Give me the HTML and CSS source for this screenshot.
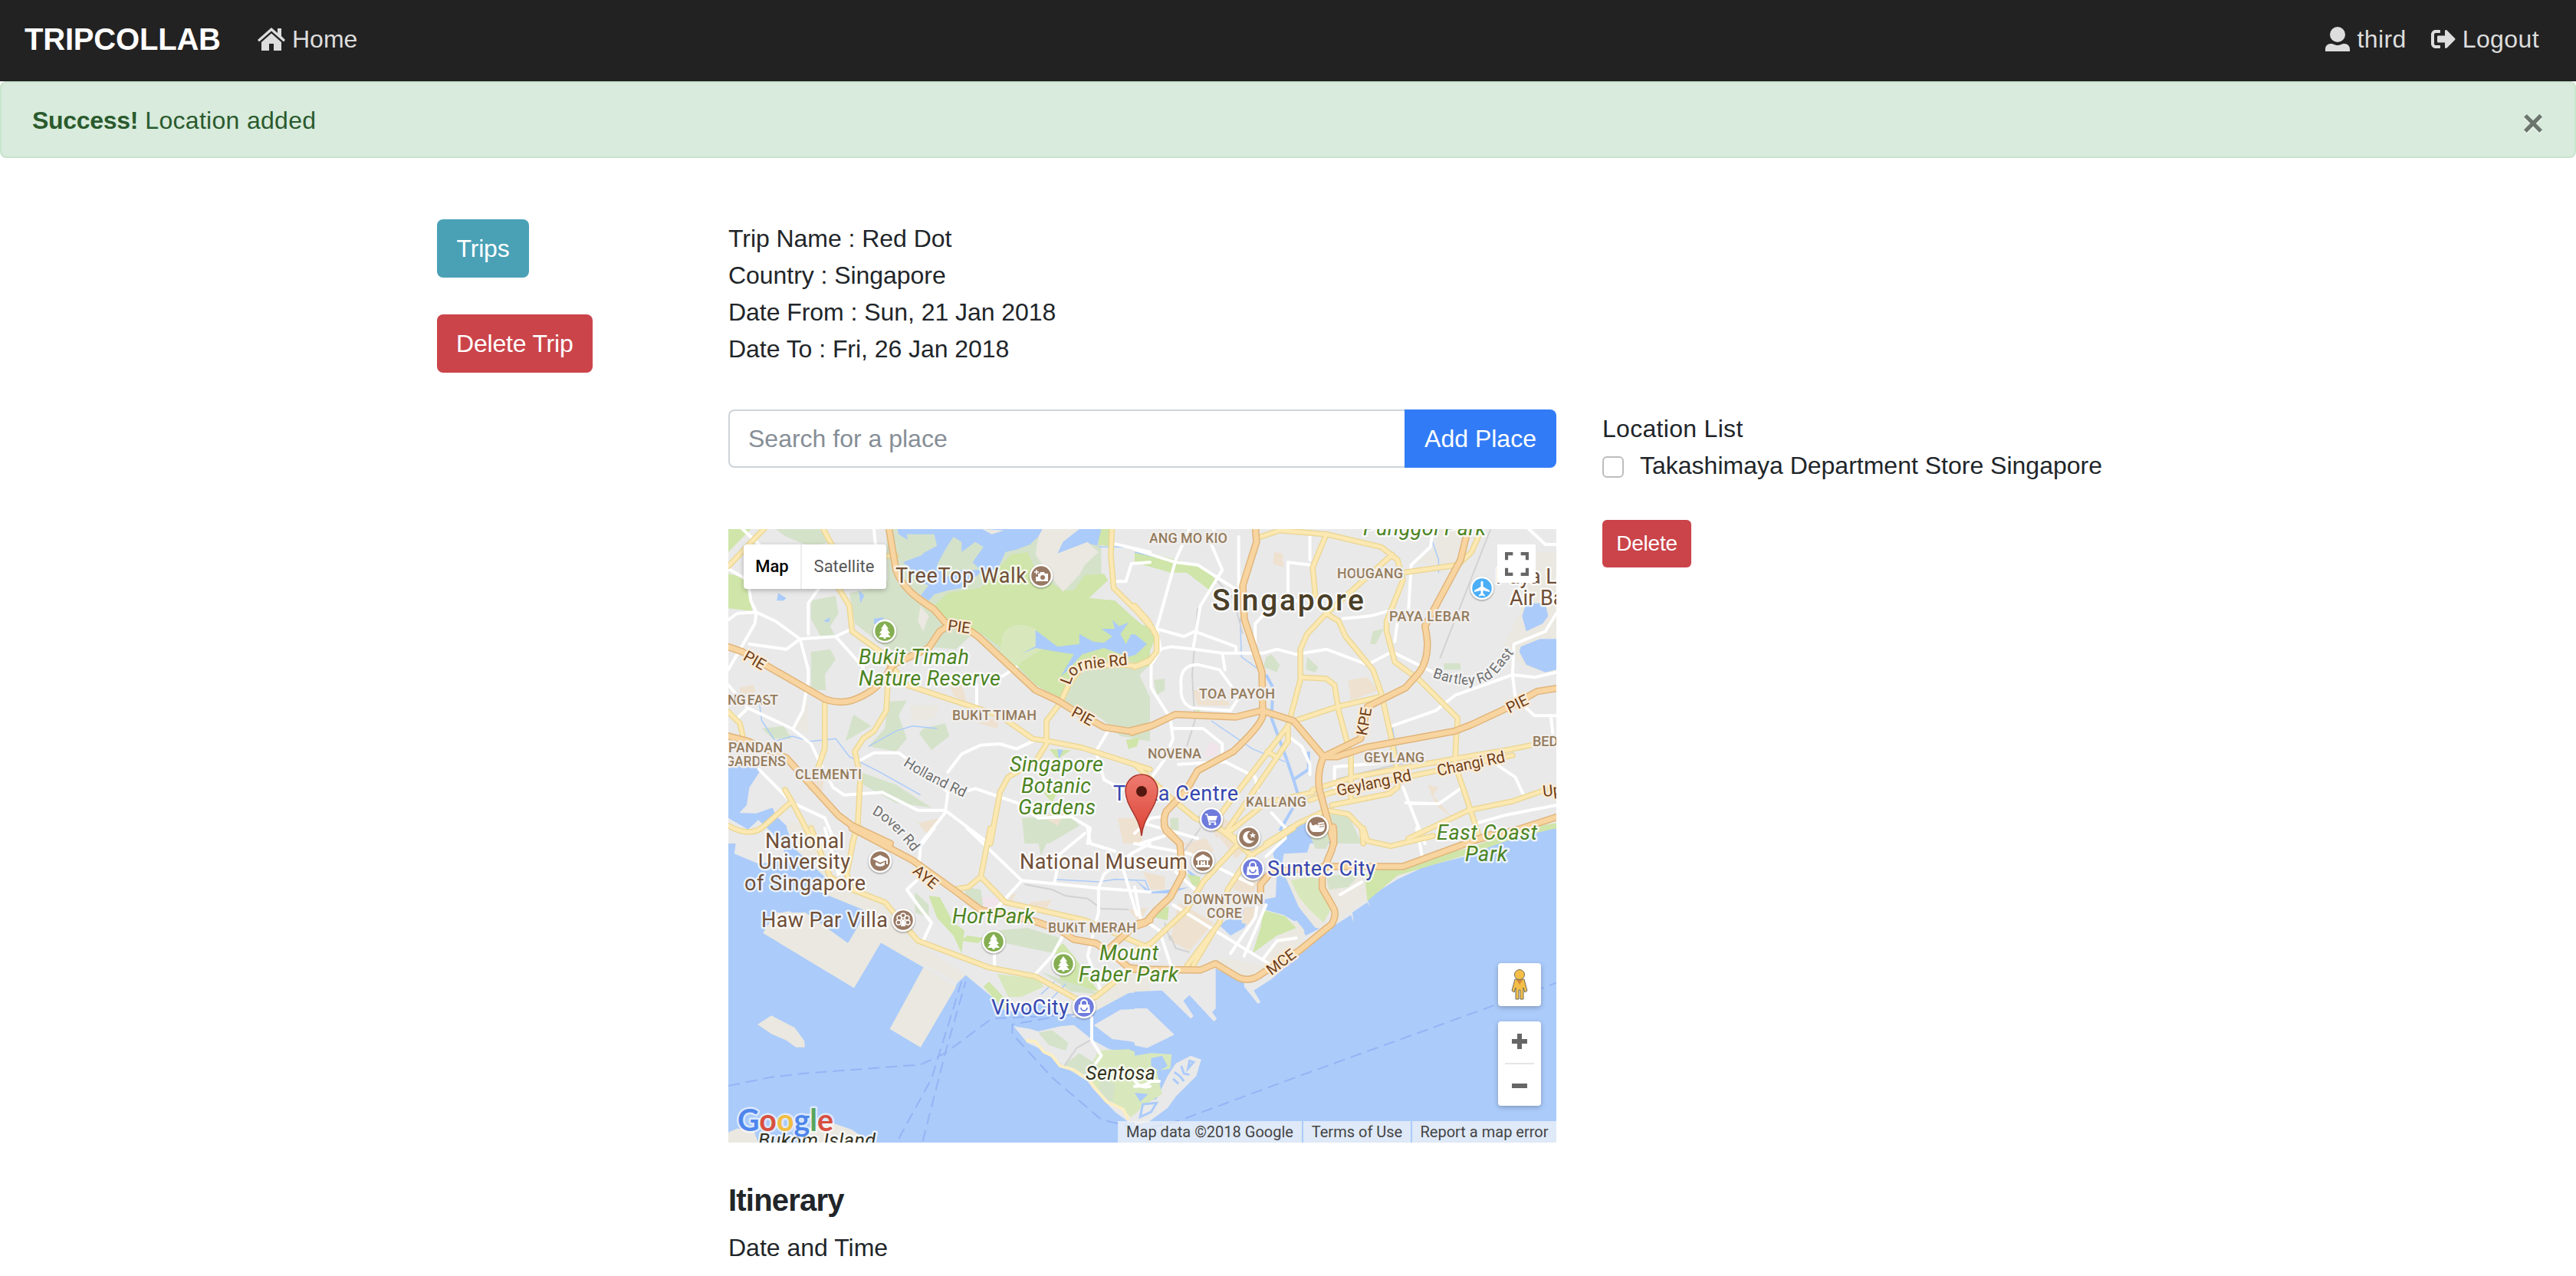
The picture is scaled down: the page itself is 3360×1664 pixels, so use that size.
FILE: index.html
```html
<!DOCTYPE html>
<html lang="en">
<head>
<meta charset="utf-8">
<title>TripCollab</title>
<link rel="stylesheet" href="styles.css">
</head>
<body>
<nav class="navbar">
  <a class="brand">TRIPCOLLAB</a>
  <a class="nav-link home"><svg class="icon-home" viewBox="0 0 36 30"><path d="M18 0 26 7V1h5v10l5 5-2 2.500L18 4.500 2 18.500 0 16Z"/><path d="M18 7.500 31 19v11H21v-9h-6v9H5V19Z"/></svg>Home</a>
  <div class="nav-right">
    <a class="nav-link"><svg class="icon-user" viewBox="0 0 32 32"><circle cx="16" cy="10" r="10"/><path d="M0 32v-3c0-4 3-7 7-7 4 0 5 2 9 2s5-2 9-2c4 0 7 3 7 7v3Z"/></svg>third</a>
    <a class="nav-link"><svg class="icon-out" viewBox="0 0 512 512"><path d="M497 273L329 441c-15 15-41 4.500-41-17v-96H152c-13.300 0-24-10.700-24-24v-96c0-13.300 10.700-24 24-24h136V88c0-21.400 25.900-32 41-17l168 168c9.300 9.400 9.300 24.600 0 34zM192 436v-40c0-6.600-5.400-12-12-12H96c-17.700 0-32-14.300-32-32V160c0-17.700 14.300-32 32-32h84c6.600 0 12-5.400 12-12V76c0-6.600-5.400-12-12-12H96c-53 0-96 43-96 96v192c0 53 43 96 96 96h84c6.600 0 12-5.400 12-12z"/></svg>Logout</a>
  </div>
</nav>
<div class="alert"><p><strong>Success!</strong> Location added</p><button class="close">×</button></div>

<main class="container">
  <aside class="actions">
    <button class="btn info">Trips</button>
    <button class="btn danger">Delete Trip</button>
  </aside>
  <section class="trip">
    <div class="details">
      <p>Trip Name : Red Dot</p>
      <p>Country : Singapore</p>
      <p>Date From : Sun, 21 Jan 2018</p>
      <p>Date To : Fri, 26 Jan 2018</p>
    </div>
    <div class="search"><input type="text" placeholder="Search for a place"><button class="btn primary">Add Place</button></div>
    <div class="map">
      <svg class="canvas" viewBox="0 0 1080 800">
        <defs>
          <linearGradient id="pin" x1="0" y1="0" x2="0" y2="1"><stop offset="0" stop-color="#ee7b70"/><stop offset="1" stop-color="#dc4234"/></linearGradient>
          <path id="tree" d="M0-10 5-3H3L7 3H4L8 8H1.500v2h-3V8H-8L-4 3H-7L-3-3H-5Z"/>
          <g id="bag"><path d="M-7-3H7L8 8H-8Z"/><path d="M-4-3v-2a4 4 0 0 1 8 0v2" fill="none" stroke="#fff" stroke-width="2"/><path d="M-4 1a4 4 0 0 0 8 0" fill="none" stroke="#6f7cdc" stroke-width="1.800"/></g>
          <path id="curve-lornie" d="M446 204Q450 184 472 182L530 176"/>
          <path id="curve-holland" d="M228 308Q258 328 320 356"/>
          <path id="curve-dover" d="M187 371Q216 386 250 434"/>
          <path id="curve-bartley" d="M918 193C958 207 984 207 1003 188L1045 136"/>
          <g id="highways">
            <g transform="translate(-10 -10) scale(.35714 .33333)">
              <path d="M612 10 640 190Q660 250 720 300L780 345 820 395 900 420 940 450 1080 590 1150 660 1230 700 1290 740 1400 805 1490 820 1568 800"/>
              <path d="M10 484 80 510 380 695Q430 715 480 700 560 670 600 610L630 560 760 495 800 430 830 410"/>
              <path d="M10 835 100 860 240 925 430 1150 480 1190 620 1260"/>
            </g>
            <g transform="translate(530 -10) scale(.35714 .33333)">
              <path d="M440 10 445 80 395 250 400 380 465 590 468 760Q460 800 360 900L230 975 190 1050 115 1135Q100 1170 115 1210L165 1260"/>
              <path d="M-10 825 60 800 150 755 370 765 465 740 580 780 690 920 740 920 840 885 1170 820 1230 795 1380 720 1470 665 1560 650"/>
              <path d="M1220 20 1190 150 1060 410Q1085 520 1040 590L990 650 850 725 825 850 690 920Q665 980 675 1050L728 1260"/>
              <path d="M1250 1245 1400 1205 1560 1150"/>
            </g>
            <g transform="translate(-10 390) scale(.35714 .33333)">
              <path d="M480 0 700 125 850 240 950 320 1150 365 1240 400 1290 435 1370 450 1440 500 1490 545 1568 555"/>
              <path d="M1568 360 1520 375 1420 470"/>
            </g>
            <g transform="translate(530 390) scale(.35714 .33333)">
              <path d="M-10 552 240 555 295 530 380 585Q425 605 470 565L600 480 720 375Q740 335 725 310L685 235 685 180 710 110Q735 60 725-5"/>
              <path d="M108-5 165 60 175 180 130 270 80 320 40 370 0 385"/>
              <path d="M460 290V220L500 170 600 160 700 150H980L1300 25"/>
            </g>
          </g>
          <g id="arterials">
            <g transform="translate(-10 -10) scale(.35714 .33333)">
              <path d="M175 10 28 175M365 10 405 90 430 260 470 330 480 430 610 530 625 600M620 560 680 640 1020 760 1140 850 1200 860 1320 885 1568 970M610 640 605 740 560 820 520 850 490 900 510 1000 500 1200 480 1260M380 715V890L350 980M28 745 70 790 85 860M28 1190Q110 1240 160 1190L260 1095 340 1260M235 1050 260 1095M1430 10 1425 130 1435 260 1520 350 1568 410M1568 540 1520 565 1440 560 1320 570 1270 640 1240 710 1190 780V870L1150 940 1050 1000 1020 1060 985 1260M605 135H640"/>
            </g>
            <g transform="translate(530 -10) scale(.35714 .33333)">
              <path d="M0 330 50 390 80 450V510L50 550 0 570M460 60 530 35 700 50 900 100 960 150 980 230 920 390V430L950 550 1040 620 1180 770 1175 830 1170 950 1230 1140 1260 1240M700 50 650 180 660 290M980 200 1180 170 1230 120 1255 60M940 130 700 360 630 440 605 500V620L560 800V860L330 1220M700 360 745 390 770 450 870 580 900 670 940 860 960 980V1040L930 1065 720 1110M605 610 700 615 730 640 745 740 790 920V1080M570 785 740 725 900 685M560 800 310 1150M485 900 515 920M650 1050 800 1000 1160 930 1380 890 1450 875M640 1090 720 1060 1150 965 1380 915M0 950 60 1010 130 1080 220 1160 340 1220 400 1260M480 1260 600 1180 700 1130 780 1145 830 1200 835 1260M1000 1240 1220 1130 1380 1095 1500 1050M340 1220 480 1100 650 1060"/>
            </g>
            <g transform="translate(-10 390) scale(.35714 .33333)">
              <path d="M985 0 950 190 1040 290 1330 360 1568 470M950 190 905 230 850 240M330 0 400 190 430 210M490 20 460 180 480 240 600 290 680 390 720 440 980 545 1150 580 1320 680 1370 660 1440 600"/>
            </g>
            <g transform="translate(530 390) scale(.35714 .33333)">
              <path d="M580 0 420 110 340 240 310 370 190 540M310 0 430 110M380 60 250 210 190 320 60 450 0 480M290 400 215 535M835 0 850 50 935 70 1090 30"/>
            </g>
          </g>
        </defs>
        <rect class="land" width="1080" height="800"/>

        <!-- parks, built-up areas and water -->
        <g transform="translate(-10 -10) scale(.35714 .33333)">
          <path class="grove" d="M605 30H1390V210L1340 300 1440 310 1500 370 1568 430V560L1530 600 1568 690V860L1460 840 1390 770 1220 690 1090 590 1000 490 920 440 860 500 750 490 690 540 600 490 490 400 470 280 540 265 610 230Z"/>
          <path class="grove" d="M200 30H360L400 80 330 100 240 60ZM330 310 420 290 430 360 400 410 420 450 370 460 330 380ZM330 510 400 500 420 540 380 600 385 660 330 660ZM485 755 550 800 455 860ZM610 705 680 700 650 760 680 850 640 900 540 880 600 810ZM740 810 820 790 835 840 770 895 725 830ZM510 980 640 1030 770 1120 640 1100 520 1030ZM150 810 230 800 260 850 190 850Z"/>
          <path class="grove" d="M1100 1160 1280 1150 1310 1190 1200 1260H1110Z"/>
          <path class="built" d="M70 650 120 640 130 680 70 700ZM830 620 880 640 900 710 850 680ZM940 790 1020 760 1010 810ZM1170 1150 1260 1130 1230 1190ZM720 1180 800 1160 760 1230ZM310 1010 380 990 370 1060 320 1050ZM1450 1160 1530 1160 1540 1260H1470Z"/>
          <path class="park" d="M28 30H110L28 120ZM28 205 90 220 115 350 28 340ZM1380 30H1430V100L1380 90ZM1200 890 1280 895 1230 930ZM1170 1050 1230 1060 1210 1100ZM1480 855 1530 845 1520 880 1490 890Z"/>
          <path class="park" d="M780 330 830 280 950 260 1000 200 1060 130 1120 120 1160 210 1250 270H1290L1330 210 1400 205 1415 230 1345 300 1440 310 1500 370 1568 430V570L1450 530 1310 570 1240 690 1150 640 1020 490 940 430 830 400Z"/>
          <path class="lawn" d="M1030 440Q1070 380 1150 420L1190 490 1100 550 1060 590 1020 510Z"/>
          <path class="water" d="M645 30H1390L1375 95 1340 85 1250 125 1225 160 1180 190 1160 60 1130 90 1080 110 1040 120 1010 190 950 200 880 260 830 270 780 285 760 310 730 290 760 250 715 235 690 180 665 160 740 130 710 90 650 50Z"/>
          <path class="sand" d="M1175 30 1310 30 1250 80 1230 125 1340 80 1380 120 1330 170 1310 210 1250 275 1200 210 1150 130 1160 60ZM955 30 1035 35 990 50Z"/>
          <path class="grove" d="M680 50 780 50 790 95 730 130 690 110ZM850 60 880 80 880 120 930 80 960 100 920 160 950 190 880 190 820 220 790 170 820 110Z"/>
          <path class="water" d="M1150 425 1230 490 1310 480V440L1360 470 1400 475 1430 450 1390 420 1440 420 1430 385 1455 410 1490 395 1460 440 1480 480 1500 440 1535 450 1510 480 1568 475V500L1490 530 1400 495 1320 520 1260 590 1242 605 1290 520 1230 510 1150 495 1095 520 1150 488ZM210 280 240 300 230 310 205 310ZM505 270 525 290 510 320ZM375 390 400 375 395 395ZM560 380 595 375 590 410 560 400ZM1230 890 1250 895 1235 930Z"/>
          <path class="water" d="M28 960 110 955 145 975 105 1040 95 1110 68 1140 130 1142 190 1120 200 1150 240 1190 255 1270H220L190 1220 130 1160 70 1150 65 1130 90 1110 95 1040 28 1040ZM28 1010 95 1010 92 1110 65 1130 80 1150 150 1155 100 1205 28 1160Z"/>
          <path class="sand" d="M315 650 320 830 270 810 305 720ZM690 720 800 720 780 770 700 780ZM730 330 760 370 740 430 720 390Z"/>
          <path class="creek" d="M140 700 150 780 200 860 260 840 330 860 420 850 470 920 580 980 730 1070M540 880 640 820 700 800 790 810M1380 100 1500 100 1568 150"/>
        </g>
        <g transform="translate(530 -10) scale(.35714 .33333)">
          <path class="park" d="M0 110 150 150 250 180 300 230 275 270 190 200 130 200 0 160ZM0 400 50 410 75 460 50 520 0 550ZM210 730H260L230 745ZM1480 1190 1540 1180V1215L1480 1220Z"/>
          <path class="grove" d="M70 620 110 615 110 660 80 680ZM480 530 500 520 530 560 520 590 470 570ZM630 530 670 570 660 590 625 580ZM870 430 910 420 880 480 860 480ZM1130 555 1190 555 1190 580 1130 580ZM700 1140 780 1150 830 1260H720ZM0 680 30 720 10 770ZM130 1160 160 1160 160 1210 130 1210Z"/>
          <path class="built" d="M510 120 540 125 545 180 505 165ZM210 660 310 660 350 720 230 720ZM780 620 850 610 890 660 790 700ZM1070 1030 1110 1040 1090 1070 1160 1160 1100 1110ZM310 1150 350 1180 300 1240 280 1200ZM0 1170 30 1200 0 1250Z"/>
          <path class="sand" d="M1110 30H1210L1160 170 1030 160 1100 100ZM1460 120H1540V600L1430 570 1340 500 1420 330Z"/>
          <path class="clinic" d="M275 860 310 880 300 920 250 920Z"/>
          <path class="water" d="M1430 320H1500L1510 370 1490 400 1430 430 1415 370ZM1410 490 1480 460 1540 460V580L1500 590 1430 560 1405 510ZM0 440 45 480 0 525ZM540 1260 550 1220 620 1160 680 1140 740 1260ZM1475 1220 1540 1205V1270H1475Z"/>
          <path class="creek wide" d="M480 600 505 650 500 770 555 930 580 1010 600 1080 530 1210M580 1010 635 970V900"/>
          <path class="creek" d="M385 380 390 530 480 600M1085 70 1110 150V200M280 780 430 890 550 940M940 800 960 920M0 120 120 150"/>
          <path class="rail" d="M1300 30 1115 535M230 340 210 600 220 780 190 880M730 1010 960 950 1150 930M300 230 360 300 395 440"/>
        </g>
        <g transform="translate(-10 390) scale(.35714 .33333)">
          <path class="sand" d="M240-20H340L400 190 600 290 720 450 920 590 860 600 600 450 340 240ZM1490 540H1568V640L1370 720 1290 700Z"/>
          <path class="grove" d="M710 250 760 300 760 350 710 330ZM890 230 950 240 960 310 900 290ZM1010 400 1120 390 1240 430 1220 490 1130 470 1040 450ZM1240 590 1330 610 1380 650 1280 640 1170 560ZM1150 0 1210 10 1170 110Z"/>
          <path class="park" d="M760 265 800 270 850 370 890 400 880 490 850 420 790 350ZM900 420 960 430 940 450 880 440ZM1220 480 1250 450 1290 500 1380 640 1240 590ZM960 620 980 600 1050 680 1040 715Z"/>
          <path class="lawn" d="M1010 570 1160 590 1180 620 1100 660 1050 660Z"/>
          <path class="clinic" d="M955 270 1010 270 1020 300 960 320Z"/>
          <path class="built" d="M1060 260 1080 255 1050 310ZM1130 290 1210 280 1180 330 1120 310ZM1490 320 1560 310 1530 370Z"/>
          <path class="water" d="M28 60 55 60 50 100 140 140 200 130 240 130 205-20 230-20 280 90 390 200 340 240 545 330 465 450 330 360 250 325 200 335 155 410 487 625 585 448 745 547 618 785 730 857 865 605 895 575 990 660 1040 715 1100 715 1150 680 1290 740 1370 715 1490 645 1568 638V1240H28Z"/>
          <path class="sand" d="M155 410 200 330 310 330 400 400 465 450 520 350 640 380 740 545 618 785 730 857 860 620 745 547 585 448 487 625Z"/>
          <path class="sand" d="M135 768 185 733 270 780 305 830 308 857 275 857 240 830 185 805ZM28 1190 60 1175 120 1180 140 1240H28ZM310 1180 400 1150 480 1180 560 1240H310Z"/>
          <path class="isle" d="M1363 770 1460 710 1568 705V860L1500 835 1430 825ZM1070 775 1130 785 1160 795 1240 775 1290 770 1360 830 1420 865 1568 890V1150H1490L1440 1110 1360 1020 1340 990 1250 930 1200 880 1120 840Z"/>
          <path class="lawn" d="M1380 870 1490 865 1568 900V1060L1500 1130 1430 1070 1350 1000 1340 960Z"/>
          <path class="grove" d="M1160 800 1210 790 1270 840 1260 870 1200 850ZM1310 880 1380 930 1330 980 1250 930ZM1390 980 1440 1000 1430 1080 1380 1030Z"/>
          <path class="beach" d="M1115 830 1150 835 1180 875 1210 890 1240 930 1290 945 1350 990 1370 1020 1410 1070 1470 1100 1490 1140"/>
          <path class="rail" d="M1110 220 1210 240 1260 265 1340 275 1390 315 1490 318M1255 930 1300 860 1350 830"/>
          <path class="creek" d="M1220 200 1380 210 1440 200 1550 205 1568 250M1170 650 1220 600M1210 665 1260 610"/>
          <path class="ferry" d="M28 1008 180 975 300 960 730 925 820 880 990 745 1290 730M650 1215 770 980 880 600M738 1225 820 880 895 600M1200 742 1065 768V805L1210 975 1390 1140 1500 1168"/>
        </g>
        <g transform="translate(530 390) scale(.35714 .33333)">
          <path class="water" d="M0 640 100 635 205 745 215 735 178 675 200 653 290 757 300 745 283 720 296 705V550L400 605V620L450 687 460 680 435 635 500 590 620 480 700 400 790 340 800 370 795 330 850 290 860 310 850 280 900 240 960 200 1060 150 1210 110 1350 50 1480 10 1550 0V1240H0Z"/>
          <path class="water" d="M560-10 505 100 520 160 515 270 470 280 480 320 545 340 600 375 625 420 690 385 630 310 560 200 540 130 545 100 630 95 640 60 720 0V-20ZM310 380 370 330 410 310 440 310 400 390 350 420ZM0 200 60 250 130 240 200 230 130 255 50 255ZM190 160 230 190 220 220Z"/>
          <path class="sand" d="M550 190 600 180 640 300 690 370 720 400 660 390 600 310ZM700 190 840 170 850 280 780 330 740 370 690 250ZM275 515 350 510 480 540 440 590 380 580 300 530ZM590 360 620 400 615 460 470 560 480 490 520 430Z"/>
          <path class="built" d="M180 60 260 40 290 90 200 110ZM300 20 360 20 400 90 370 120ZM30 170 110 190 110 240 60 240ZM160 290 290 370 200 480 130 440ZM370 190 450 210 430 260 360 240ZM400 310 450 310 420 380 390 370Z"/>
          <path class="park" d="M840 180 960 140 1210 80 1320 40 1480 0 1540 0 1400 35 1210 105 960 185 850 285ZM470 320 550 345 590 390 520 420 430 490 460 390ZM80 320 125 305 120 360 75 350ZM190 180 240 190 235 235 210 220Z"/>
          <path class="lawn" d="M570 205 640 190 680 200 690 260 720 310 690 370 640 320 600 270Z"/>
          <path class="grove" d="M630 0 730 0 700 80 660 80ZM700 190 830 170 780 230 710 240Z"/>
          <path class="isle" d="M0 705 45 705 145 808 45 860 0 850ZM120 970 150 920 205 890 243 905 225 970 150 1050 120 1095 50 1150 0 1160V1080L80 1060Z"/>
          <path class="lawn" d="M0 890 60 880 135 885 130 940 80 950 100 1040 40 1080 0 1120Z"/>
          <path class="water" d="M60 900 100 890 120 930 90 950 60 930ZM0 1035 50 1040 20 1070Z"/>
          <path class="canal" d="M200 910 215 915 195 940ZM170 930 180 960 200 965M145 955 165 970 180 990M140 980 160 1000M30 1080 80 1075 60 1110 20 1130Z"/>
          <path class="ferry" d="M60 1170 160 1145 600 970 1540 605"/>
          <path class="rail" d="M130 420 150 470 200 485M240 0 180 90M110 370 130 440"/>
        </g>

        <!-- streets -->
        <g class="streets">
          <g transform="translate(-10 -10) scale(.35714 .33333)">
            <path d="M80 30 150 100M28 185 100 230 110 310 130 355 200 390 290 460 320 580V620L300 740 265 810M28 385 60 360 130 355 125 400 28 580M105 480 240 500 290 460 420 450 480 420M420 450 520 570M28 640 100 730 260 810 330 870 365 950 410 1040 450 1070 590 1060 720 1130 820 1130 980 1260M500 940 560 905 650 905 720 960 830 1060 820 1140 730 1260M880 1060 930 1045 1080 1100 1160 1160 1280 1155 1350 1200 1340 1260M830 980 880 910 950 875 1020 870 1080 890 1140 860M140 970 260 1100 380 1160 420 1260M360 260 320 320V440M560 30 565 90M935 640V720M1030 605 1080 570M1430 85 1568 120M1568 160 1500 165 1480 235 1440 235M1415 820 1370 900 1400 1010 1470 1050M60 770 100 730"/>
          </g>
          <g transform="translate(530 -10) scale(.35714 .33333)">
            <path d="M0 110 150 160 230 170 420 300M200 30 150 150 80 420 95 500 60 560V650L130 770 140 850 110 930 30 1050M290 30 280 90 320 190 240 330 215 490M80 420 180 450 220 430 370 490V515M95 500 130 490 220 500 320 515 470 515 520 500 590 520 700 500 850 560 940 510 1090 590M380 60V250M170 650Q160 560 230 560L310 580 350 640 380 690 350 740 210 730Q165 710 170 650M320 515 330 580M440 480V400L520 310M640 170 560 160V290L590 310M640 60V150M760 380 860 370 930 350M1090 30 1080 100 1010 170 1000 350 960 390 950 470M1380 600 1385 480 1500 430 1540 360M940 800 1100 740 1170 680 1380 600 1460 610 1540 590M1380 600 1390 690 1460 760H1540M1440 30 1500 90H1540M140 810 250 810 320 870V920M160 950 330 940 440 1000 450 1050M560 840 610 880 640 950V990M730 1040V960L960 940M980 1040 1060 1260M990 1100 1110 1105 1190 1045M1320 950 1390 1000 1420 1070M1250 1180 1350 1150 1540 1110M500 1140 560 1210M1520 760 1530 860M30 1180 230 1240M0 1220 60 1160 100 1155"/>
          </g>
          <g transform="translate(-10 390) scale(.35714 .33333)">
            <path d="M740 440 770 370 720 300 680 240 720 200 730 70 780 0M900 0 1100 205 1380 235 1568 250M1100 205 1010 310M1000 480V545M1150 570 1210 500 1250 420M1380 235 1380 330 1340 500 1390 640M1340 0 1350 60 1440 90M1220 210 1240 100 1330 20M1355 740V830L1390 890 1370 920M1380 235 1400 180 1500 100 1568 60M1470 160 1520 340M1510 985Q1530 1020 1568 1010M380 0 430 180"/>
          </g>
          <g transform="translate(530 390) scale(.35714 .33333)">
            <path d="M0 60 200 100 430 220M150 170 250 270M0 230 20 350 90 400 130 530M140 300 490 530M350 490 440 350 450 280M400 500 480 300M550 0V40L480 110M1030 0 1050 110M110 30 20 60M470 510 520 440 590 430M0 1010Q40 1010 60 990L90 990M750 260 830 210"/>
          </g>
        </g>
        <use href="#arterials" class="arterial-edge"/><use href="#arterials" class="arterial"/>
        <use href="#highways" class="highway-edge"/><use href="#highways" class="highway"/>

        <!-- labels -->
        <g class="label area">
          <text x="-1" y="229" textLength="66">NG EAST</text><text x="292" y="249" textLength="110">BUKIT TIMAH</text>
          <text x="0" y="291" textLength="71">PANDAN</text><text x="-4" y="309" textLength="79">GARDENS</text>
          <text x="87" y="326" textLength="87">CLEMENTI</text><text x="549" y="18" textLength="102">ANG MO KIO</text>
          <text x="794" y="64" textLength="86">HOUGANG</text><text x="862" y="120" textLength="105">PAYA LEBAR</text>
          <text x="614" y="221" textLength="99">TOA PAYOH</text><text x="547" y="299" textLength="70">NOVENA</text>
          <text x="1049" y="283">BEDOK</text><text x="829" y="304" textLength="79">GEYLANG</text>
          <text x="675" y="362" textLength="79">KALLANG</text><text x="417" y="526" textLength="115">BUKIT MERAH</text>
          <text x="594" y="489" textLength="104">DOWNTOWN</text><text x="624" y="507" textLength="46">CORE</text>
        </g>
        <g class="label nature">
          <text x="170" y="176" textLength="144">Bukit Timah</text><text x="170" y="204" textLength="185">Nature Reserve</text>
          <text x="367" y="316" textLength="122">Singapore</text><text x="382" y="344" textLength="91">Botanic</text><text x="378" y="372" textLength="101">Gardens</text>
          <text x="828" y="8" textLength="160">Punggol Park</text><text x="924" y="405" textLength="131">East Coast</text><text x="961" y="433" textLength="55">Park</text>
          <text x="292" y="514" textLength="107">HortPark</text><text x="484" y="562" textLength="77">Mount</text><text x="457" y="590" textLength="130">Faber Park</text>
        </g>
        <g class="label sight">
          <text x="218" y="70" textLength="171">TreeTop Walk</text><text x="1001" y="71">Paya Lebar</text><text x="1019" y="99">Air Base</text>
          <text x="48" y="416" textLength="103">National</text><text x="39" y="443" textLength="120">University</text><text x="21" y="471" textLength="158">of Singapore</text>
          <text x="43" y="519" textLength="165">Haw Par Villa</text><text x="380" y="443" textLength="219">National Museum</text>
        </g>
        <g class="label shop"><text x="502" y="354" textLength="163">Tekka Centre</text><text x="703" y="452" textLength="141">Suntec City</text><text x="343" y="633" textLength="101">VivoCity</text></g>
        <g class="label isle-name"><text x="466" y="718" textLength="91">Sentosa</text><text x="39" y="806" textLength="153">Bukom Island</text></g>
        <text class="label city" x="631" y="106" textLength="198">Singapore</text>
        <g class="label road">
          <text transform="translate(300 134) rotate(8)">PIE</text><text transform="translate(31 177) rotate(30)">PIE</text><text transform="translate(459 250) rotate(29)">PIE</text>
          <text transform="translate(1032 234) rotate(-26)">PIE</text><text transform="translate(836 252) rotate(-80)">KPE</text>
          <text transform="translate(253 459) rotate(40)">AYE</text><text transform="translate(725 570) rotate(-37)">MCE</text>
        </g>
        <g class="label road start">
          <text transform="translate(926 322) rotate(-12)" textLength="90">Changi Rd</text><text transform="translate(795 348) rotate(-12)" textLength="99">Geylang Rd</text><text transform="translate(1063 349) rotate(-6)">Upper</text>
          <text><textPath href="#curve-lornie">Lornie Rd</textPath></text>
        </g>
        <g class="label street"><text><textPath href="#curve-holland">Holland Rd</textPath></text><text><textPath href="#curve-dover">Dover Rd</textPath></text><text><textPath href="#curve-bartley">Bartley Rd East</textPath></text></g>

        <!-- places -->
        <g class="poi brown" transform="translate(408 61)"><circle r="14"/><path d="M-6-3h4l1-2h5l1 2h4V7H-7V1h3V-3Z"/><path d="M-9-5h6M-6-8v6" stroke="#fff" stroke-width="1.500"/><circle class="hole" cx="2" cy="2" r="3"/></g>
        <g class="poi green" transform="translate(204 133)"><circle r="14"/><use href="#tree"/></g>
        <g class="poi brown" transform="translate(198 433)"><circle r="14"/><path d="M-10-3 0-8 10-3V4H8V-1L0 2ZM-6 1 0 4 6 1V5Q0 9-6 5Z"/></g>
        <g class="poi brown" transform="translate(228 510)"><circle r="14"/><path d="M-2-1H2L3 8H-3Z"/><g class="rings"><circle cy="-6" r="3"/><circle cx="-5" cy="-3" r="3"/><circle cx="5" cy="-3" r="3"/><circle cx="-6" cy="3" r="3"/><circle cx="6" cy="3" r="3"/></g></g>
        <g class="poi green" transform="translate(346 538)"><circle r="14"/><use href="#tree"/></g>
        <g class="poi green" transform="translate(437 567)"><circle r="14"/><use href="#tree"/></g>
        <g class="poi violet" transform="translate(464 623)"><circle r="14"/><use href="#bag"/></g>
        <g class="poi violet" transform="translate(684 443)"><circle r="14"/><use href="#bag"/></g>
        <g class="poi sky" transform="translate(983 77)"><circle r="14"/><path d="M-1.500-8Q0-11 1.500-8V-2L10 3V5L1.500 3V7L4 9V10.500L0 9.500-4 10.500V9L-1.500 7V3L-10 5V3L-1.500-2Z"/></g>
        <g class="poi violet" transform="translate(630 378)"><circle r="14"/><path d="M-5-4H8L6 2H-3Z"/><path d="M-8-6H-5.500L-3 4H6" fill="none" stroke="#fff" stroke-width="1.500"/><circle cx="-2" cy="6.500" r="1.600"/><circle cx="5" cy="6.500" r="1.600"/></g>
        <g class="poi brown" transform="translate(679 402)"><circle r="14"/><path d="M2-8A8 8 0 1 0 7 4 6.500 6.500 0 1 1 2-8ZM5-7l1 3h3L7-2 8 1 5-1 2 1 3-2 1-4H4Z"/></g>
        <g class="poi brown" transform="translate(768 388)"><circle r="14"/><path d="M-10 0Q-11-5-8-6L-7-2.500-5-1.500Q0-4 2-1L1-5 9-6 10 0Q10 7 4 7H-5Q-9 6-10 0Z"/><path class="hole" d="M3-3 9-4V-3L3-2ZM3 0 9-1V0L3 1Z"/></g>
        <g class="poi brown" transform="translate(619 433)"><circle r="14"/><path d="M0-9 9-4V-1H7V5H9V8H-9V5H-7V-1H-9V-4Z"/><path class="hole" d="M-5-1h10v6H-5Z"/><path d="M-3 5V0H-1L0 2 1 0H3V5H1L0 3-1 5Z"/></g>
        <path class="marker" d="M539 400C537 375 518 362 518 341a21 21 0 0 1 42 0C560 362 541 375 539 400Z"/><circle cx="539" cy="342" r="7" fill="#54170f"/>
        <text class="google" x="12" y="785" textLength="125" lengthAdjust="spacingAndGlyphs"><tspan class="b">G</tspan><tspan class="r">o</tspan><tspan class="y">o</tspan><tspan class="b">g</tspan><tspan class="g">l</tspan><tspan class="r">e</tspan></text>
      </svg>
      <div class="map-type"><span class="on">Map</span><span>Satellite</span></div>
      <div class="fullscreen"><svg viewBox="0 0 30 30"><path d="M2 10V2H10M20 2H28V10M28 20V28H20M10 28H2V20"/></svg></div>
      <div class="pegman"><svg viewBox="0 0 24 42"><path d="M6 14H18L22 29 19 31 17 25V40H13V28H11V40H7V25L5 31 2 29Z"/><circle cx="12" cy="8" r="6.500"/><path class="collar" d="M8 15H16L12 21Z"/></svg></div>
      <div class="zoom"><svg viewBox="0 0 22 22"><path d="M8 1h6v7h7v6h-7v7H8v-7H1V8h7Z"/></svg><hr><svg viewBox="0 0 22 22"><path d="M1 8h20v6H1Z"/></svg></div>
      <div class="credits"><span>Map data ©2018 Google</span><span>Terms of Use</span><span>Report a map error</span></div>
    </div>
    <h5>Itinerary</h5>
    <p class="when">Date and Time</p>
  </section>
  <section class="places">
    <p class="title">Location List</p>
    <label><input type="checkbox"><span>Takashimaya Department Store Singapore</span></label>
    <button class="btn danger small">Delete</button>
  </section>
</main>
</body>
</html>
```
FILE: styles.css
```css
* { box-sizing: border-box; }
html, body { height: 100%; }
body { margin: 0; overflow: hidden; background: #fff; color: #212529; font: 32px/48px "Liberation Sans", Arial, sans-serif; }
p, h5 { margin: 0; }
button, input { font: inherit; margin: 0; }
svg { display: block; }

.navbar { display: flex; align-items: center; height: 106px; padding: 0 48px 4px 32px; background: #222; color: #ddd; }
.brand { width: 304px; color: #fff; font-size: 40px; font-weight: bold; letter-spacing: -0.2px; }
.nav-link { display: flex; align-items: center; gap: 9px; fill: #ddd; }
.nav-right { display: flex; gap: 32px; margin-left: auto; letter-spacing: 0.4px; }
.icon-home { width: 36px; height: 30px; }
.icon-user { width: 32px; height: 32px; }
.icon-out { width: 32px; height: 32px; }

.alert { display: flex; justify-content: space-between; align-items: center; height: 100px; padding: 0 40px; background: #d8ebdc; border: 2px solid #c8e4cd; border-radius: 8px; color: #2a5a2d; }
.alert strong { letter-spacing: -0.3px; }
.alert p { padding-top: 1px; letter-spacing: 0.3px; }
.close { padding: 0; border: 0; background: none; color: #000; opacity: .5; font-size: 48px; font-weight: bold; text-shadow: 0 2px 0 #fff; line-height: 48px; position: relative; top: 5px; }

.container { display: grid; grid-template-columns: 380px 1140px 760px; width: 2280px; margin: 80px auto 0; }
.container > * { padding: 0 30px; }
.btn { display: block; height: 76px; padding: 0 25px; border: 0; border-radius: 8px; color: #fff; white-space: nowrap; letter-spacing: -0.2px; }
.info { width: 120px; background: #4aa1b6; }
.danger { background: #ca444a; }
.actions { display: flex; flex-direction: column; align-items: flex-start; gap: 48px; }
.details { height: 248px; padding-top: 1px; letter-spacing: -0.05px; }
.search { display: flex; margin-bottom: 80px; }
.search input { flex: 1; height: 76px; padding: 0 24px; border: 2px solid #ced4da; border-right: 0; border-radius: 8px 0 0 8px; }
.search input::placeholder { color: #868e96; opacity: 1; }
.primary { width: 198px; padding: 0; background: #327bf6; border-radius: 0 8px 8px 0; letter-spacing: 0; }
h5 { margin: 53px 0 16px; font-size: 40px; line-height: 44px; letter-spacing: -0.8px; }
.places .title { margin-top: 249px; letter-spacing: 0.3px; }
.places label { display: flex; align-items: center; gap: 21px; margin-bottom: 47px; white-space: nowrap; }
.places input { appearance: none; width: 28px; height: 28px; margin-top: 3px; border: 2px solid #bdbdbd; border-radius: 6px; background: #fff; }
.small { width: 116px; height: 62px; padding: 0; border-radius: 6px; font-size: 28px; }

.map { position: relative; width: 1080px; height: 800px; overflow: hidden; font-family: Roboto, sans-serif; }
.canvas { width: 1080px; height: 800px; }
.canvas path { vector-effect: non-scaling-stroke; }
.land { fill: #e9e9e9; }
.water { fill: #abcbfa; }
.isle { fill: #e9e9e9; }
.sand { fill: #eae8e0; }
.grove { fill: #d5e2ca; }
.park { fill: #cfe5a9; }
.lawn { fill: #d8e8bc; }
.built { fill: #eee1d0; }
.clinic { fill: #f1e4ea; }
.creek { fill: none; stroke: #abcbfa; stroke-width: 1.5; }
.creek.wide { stroke-width: 4; }
.canal { fill: none; stroke: #abcbfa; stroke-width: 3; }
.rail { fill: none; stroke: #d2d2d2; stroke-width: 2; }
.beach { fill: none; stroke: #fbeec3; stroke-width: 4; }
.ferry { fill: none; stroke: #94b4f5; stroke-width: 2; stroke-dasharray: 15 8; }
.streets, .arterial, .arterial-edge, .highway, .highway-edge { fill: none; stroke-linejoin: round; stroke-linecap: round; }
.streets { stroke: #fff; stroke-width: 4; }
.arterial-edge { stroke: #ead590; stroke-width: 7.5; }
.arterial { stroke: #fbe8b3; stroke-width: 5; }
.highway-edge { stroke: #e1b57b; stroke-width: 9.5; }
.highway { stroke: #f8d5a0; stroke-width: 6.5; }

.label { paint-order: stroke; stroke: rgba(255, 255, 255, .75); stroke-width: 5px; stroke-linejoin: round; font-size: 27px; }
.area { fill: #947b5c; font-size: 18px; font-weight: 500; stroke: #f0eeec; }
.nature { fill: #4c8422; font-style: italic; }
.sight { fill: #704f37; }
.shop { fill: #3547b0; }
.isle-name { fill: #33321f; font-size: 25px; font-style: italic; }
.city { fill: #4a3f28; font-size: 39px; font-weight: 500; }
.road { fill: #6f3d17; font-size: 20px; text-anchor: middle; stroke: #faebd5; }
.road.start { text-anchor: start; font-size: 20.5px; }
.street { fill: #6d6d6d; font-size: 18.5px; stroke: #f2f2f2; }
.poi { fill: #fff; filter: drop-shadow(0 1px 1px rgba(0, 0, 0, .4)); }
.poi > circle:first-child { stroke: #fff; stroke-width: 2.5; }
.brown > circle:first-child, .brown .hole { fill: #987963; }
.green > circle:first-child { fill: #84ae51; }
.violet > circle:first-child { fill: #6f7cdc; }
.sky > circle:first-child { fill: #4caef7; }
.rings { fill: none; stroke: #fff; stroke-width: 1.5; }
.marker { fill: url(#pin); stroke: #a9352c; stroke-width: 1.5; }
.google { font: 700 40px Lato, sans-serif; paint-order: stroke; stroke: rgba(255, 255, 255, .6); stroke-width: 5px; stroke-linejoin: round; }
.google .b { fill: #4f86ec; }
.google .r { fill: #d94f3f; }
.google .y { fill: #f2bd42; }
.google .g { fill: #58a55c; }

.map-type, .fullscreen, .pegman, .zoom, .credits { position: absolute; display: flex; background: #fff; }
.map-type { left: 20px; top: 20px; width: 186px; height: 58px; border-radius: 4px; box-shadow: 0 2px 6px rgba(0, 0, 0, .25); font-size: 22px; line-height: 57px; color: #565656; }
.map-type span { flex: 1; text-align: center; }
.map-type .on { flex: 0 0 76px; border-right: 2px solid #eee; color: #000; font-weight: 500; }
.fullscreen { left: 1003px; top: 20px; width: 50px; height: 50px; align-items: center; justify-content: center; }
.fullscreen svg { width: 31px; height: 31px; fill: none; stroke: #666; stroke-width: 4; }
.pegman { left: 1004px; top: 566px; width: 56px; height: 56px; align-items: center; justify-content: center; border-radius: 4px; box-shadow: 0 2px 6px rgba(0, 0, 0, .25); }
.pegman svg { width: 24px; height: 42px; fill: #f4bf48; stroke: #6d6a5c; stroke-width: 1; }
.pegman .collar { fill: #d5873c; stroke: none; }
.zoom { left: 1004px; top: 642px; width: 56px; height: 110px; flex-direction: column; align-items: center; justify-content: center; gap: 17px; border-radius: 4px; box-shadow: 0 2px 6px rgba(0, 0, 0, .25); }
.zoom svg { width: 22px; height: 22px; fill: #666; }
.zoom hr { width: 38px; height: 2px; margin: 0; border: 0; background: #e6e6e6; }
.credits { right: 0; bottom: 0; height: 28px; gap: 2px; background: none; color: #444; font-size: 20px; line-height: 28px; text-align: center; white-space: nowrap; }
.credits span { width: 240px; background: rgba(245, 245, 245, .7); }
.credits span:nth-child(2) { width: 140px; }
.credits span:nth-child(3) { width: 188px; }
```
